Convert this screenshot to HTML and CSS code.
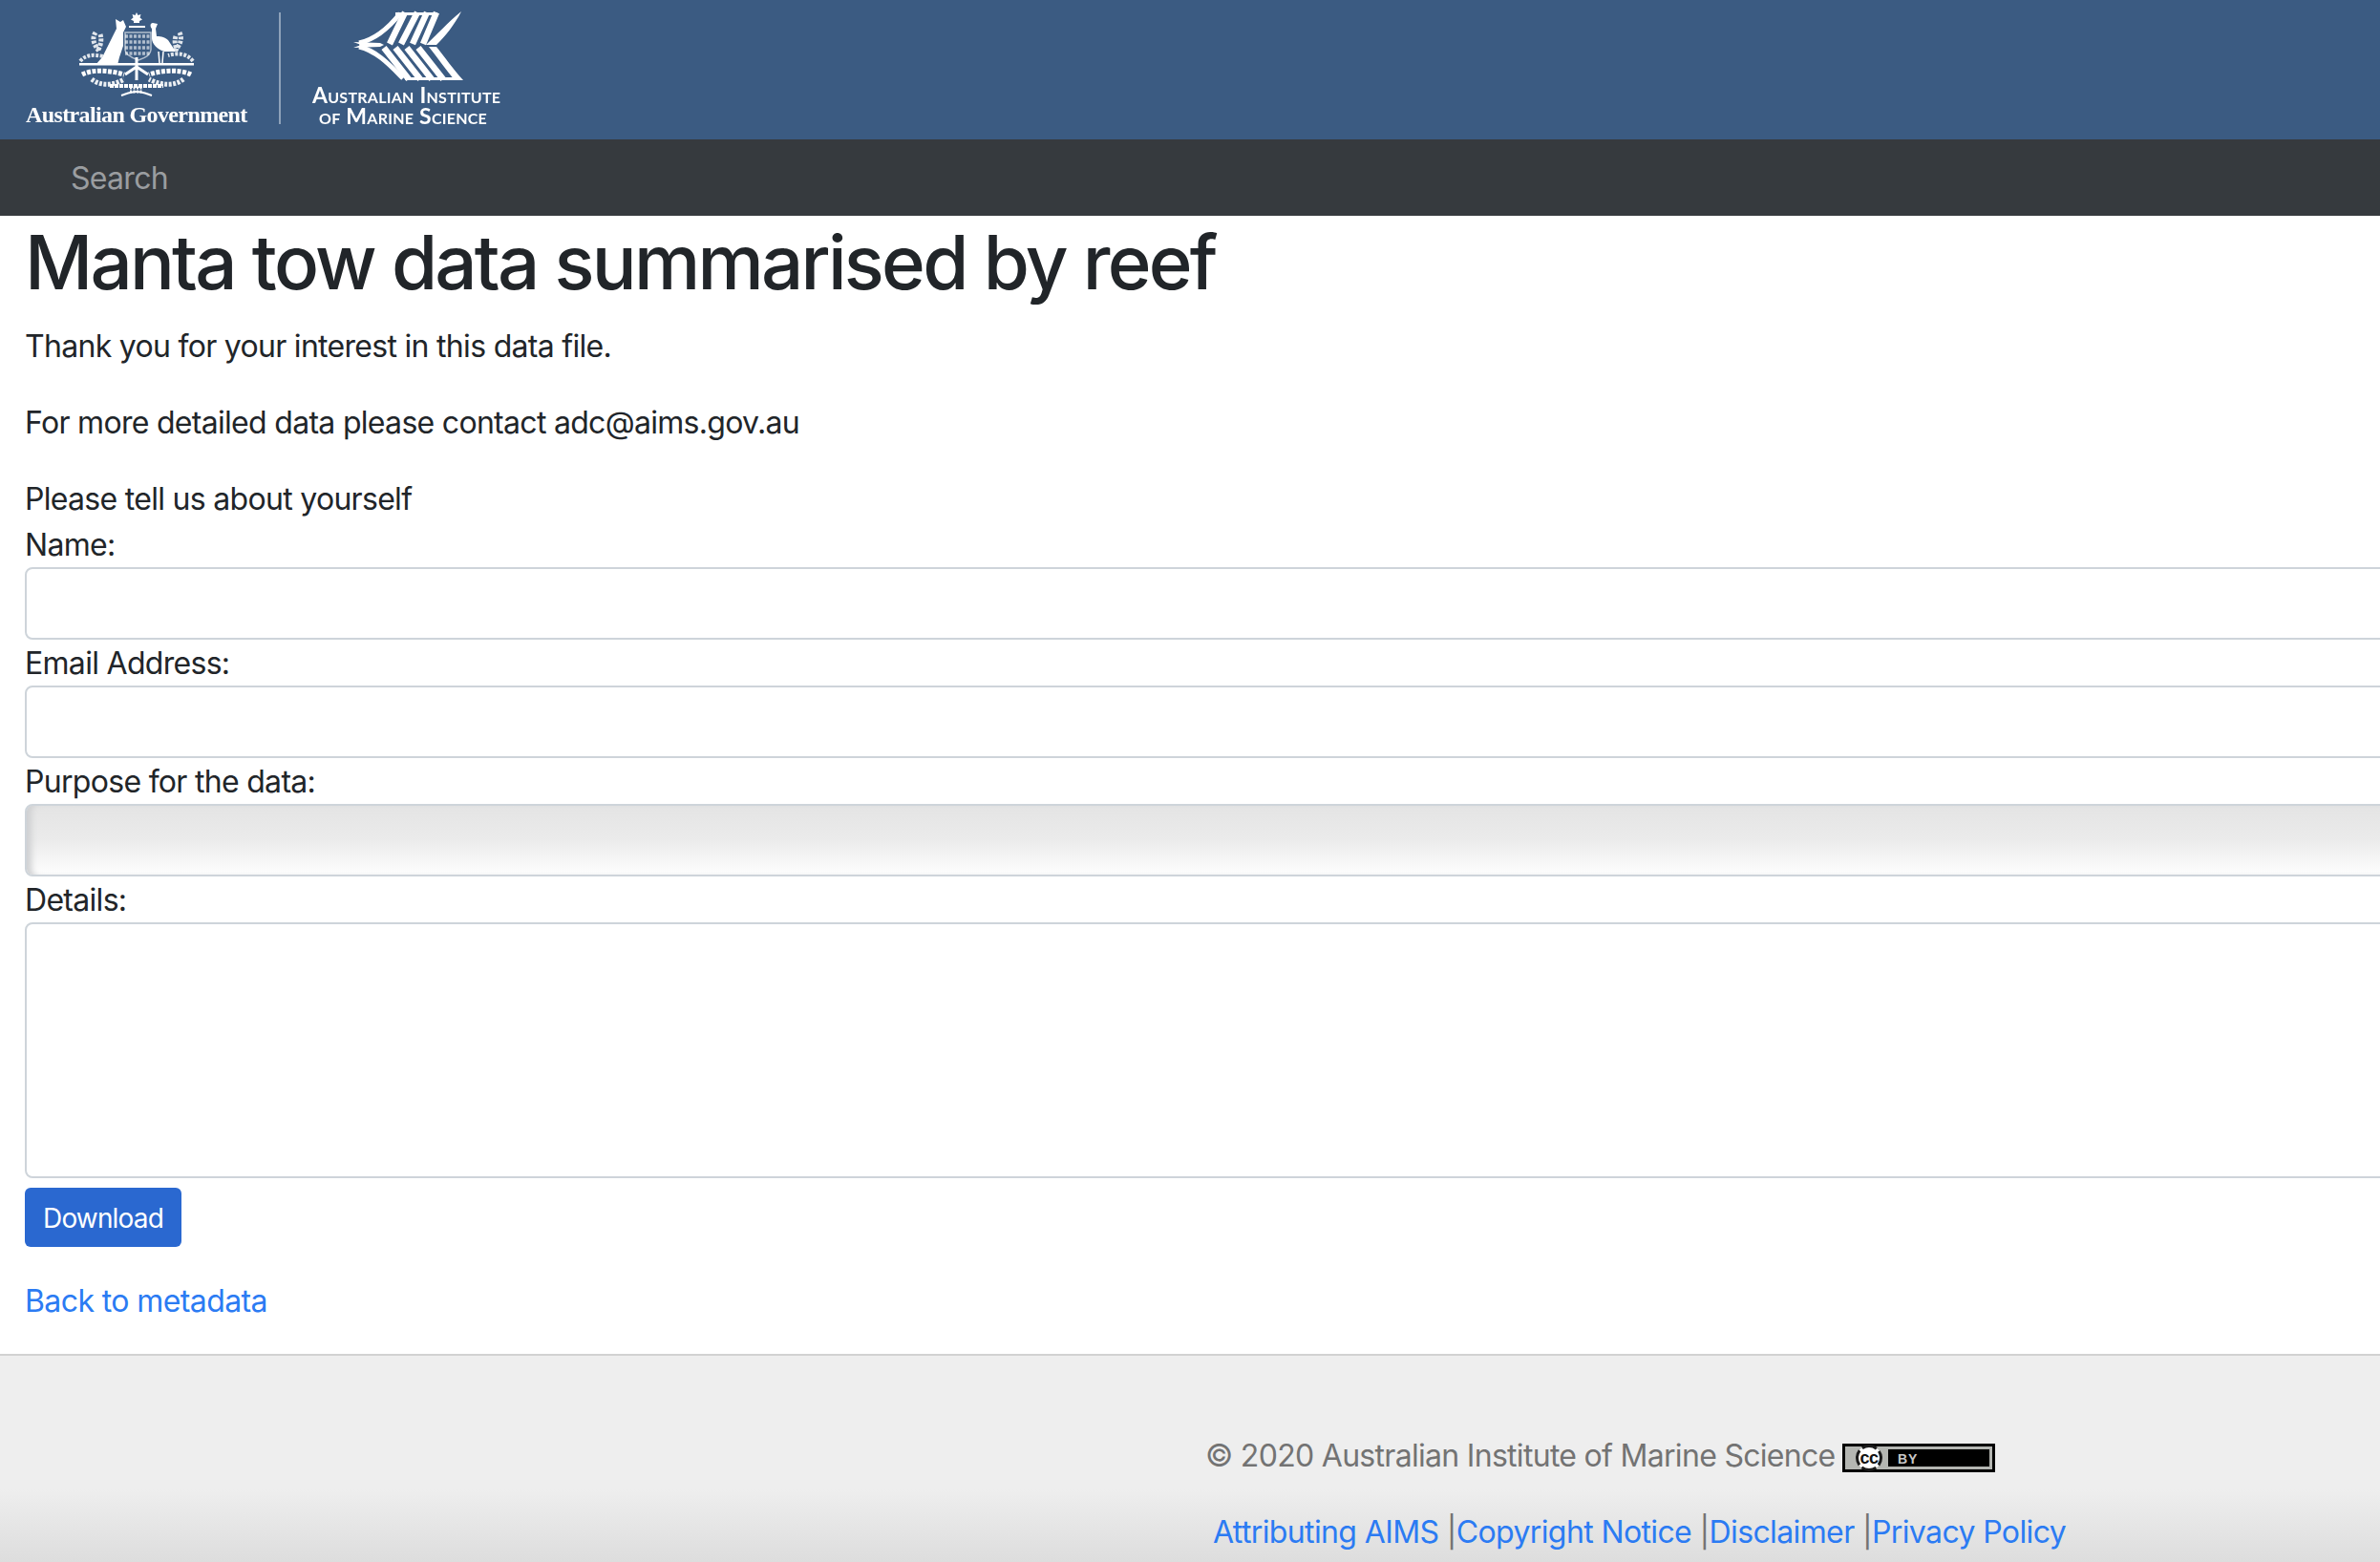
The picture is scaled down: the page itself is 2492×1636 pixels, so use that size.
FILE: index.html
```html
<!DOCTYPE html>
<html lang="en">
<head>
<meta charset="utf-8">
<title>Manta tow data summarised by reef</title>
<link rel="stylesheet" href="styles.css">
</head>
<body>
<header class="brand">
  <div class="gov">
    <svg class="arms" viewBox="70 8 146 96" width="146" height="96" aria-hidden="true">
      <g fill="#fff">
        <path d="M143 13l1.500 3 3-1-1 3.500 2.500 2-3 1.500v2h-6v-2l-3-1.500 2.500-2-1-3.500 3 1z"/>
        <rect x="135" y="27" width="17" height="2"/>
        <path d="M121 20L126 23L129 21L132 28L129 34L129 48L125 60L123 68L116 68L112 66L100 68L107 60L112 50L118 38L122 30Z"/>
        <path d="M160 24C157 24 157 28 159 30L159 40C159 46 165 52 172 54L184 54L176 42C172 38 166 38 164 38L163 30L165 25Z"/>
        <path d="M83 66h120v2.500H83z"/>
      </g>
      <g fill="none" stroke="#fff">
        <path d="M166 54l1 12M171 54l-1 12" stroke-width="1.500"/>
        <path d="M131 34h27v18c0 6-7 9-13 11-6-2-14-5-14-11z" stroke-width="1.500" opacity=".6"/>
        <path d="M131 38h27M131 44h27M131 50h27M131 56h27" stroke-width="3.500" stroke-dasharray="3 1.500" opacity=".6"/>
        <path d="M100 34c-5 8 0 14 4 20M105 36c2 6 0 12-2 16" stroke-width="5" stroke-dasharray="3 1.500" opacity=".85"/>
        <path d="M188 34c4 8-1 14-5 20M184 38c-2 6 0 10 1 14" stroke-width="5" stroke-dasharray="3 1.500" opacity=".85"/>
        <path d="M84 64c6-7 14-7 24-5M202 64c-6-8-16-9-26-6" stroke-width="4" stroke-dasharray="3 1.500" opacity=".85"/>
        <path d="M86 78c12-6 30-4 44 0M200 78c-12-6-32-4-44 0" stroke-width="5" stroke-dasharray="4 1.500"/>
        <path d="M96 83c10 8 24 6 34 0M192 83c-10 8-24 6-36 0" stroke-width="5" stroke-dasharray="3 1.500" opacity=".9"/>
        <path d="M143 60v24M143 70l-12 8M143 70l12 8" stroke-width="3"/>
        <path d="M115 90h56" stroke-width="4" stroke-dasharray="4 1"/>
        <path d="M127 100c6-2 10-4 16-4s10 2 16 4" stroke-width="2"/>
        <path d="M136 92h14M136 96h14" stroke-width="3" stroke-dasharray="2 1.500"/>
      </g>
    </svg>
    <span class="gov-name">Australian Government</span>
  </div>
  <div class="brand-rule"></div>
  <div class="aims">
    <svg class="aims-mark" viewBox="368 10 118 76" width="118" height="76" aria-hidden="true">
      <path d="M370 44L398 45L402 47L398 49L370 50L378 47Z" fill="#fff"/>
      <g fill="none" stroke="#fff" stroke-width="6.500">
        <path d="M376 45C394 41 408 28 419 14" stroke-width="5"/>
        <path d="M408 46L424 13M420 46L437 13M432 46L447 13M443 46L457 13"/>
        <path d="M376 49C394 53 408 68 422 82" stroke-width="5"/>
        <path d="M402 50L428 83M414 50L440 83M426 50L452 83M438 50L464 83"/>
      </g>
      <path d="M414 13H458V16H414Z" fill="#fff"/>
      <path d="M424 81H476V84H424Z" fill="#fff"/>
      <path d="M446 47C458 36 468 24 483 12C476 26 466 38 457 47Z" fill="#fff"/>
      <path d="M449 49L457 49C466 60 474 72 485 84L476 84C466 72 458 60 449 49Z" fill="#fff"/>
    </svg>
    <span class="aims-name">Australian Institute<br>of Marine Science</span>
  </div>
</header>
<nav class="topnav"><a class="topnav-link" href="#">Search</a></nav>
<main class="content">
  <h1 class="title">Manta tow data summarised by reef</h1>
  <p class="para">Thank you for your interest in this data file.</p>
  <p class="para">For more detailed data please contact adc@aims.gov.au</p>
  <form class="request">
    <div class="lead">Please tell us about yourself</div>
    <label class="field-label" for="name">Name:</label>
    <input class="control" id="name" type="text">
    <label class="field-label" for="email">Email Address:</label>
    <input class="control" id="email" type="text">
    <label class="field-label" for="purpose">Purpose for the data:</label>
    <div class="control control-select" id="purpose"></div>
    <label class="field-label" for="details">Details:</label>
    <textarea class="control control-area" id="details"></textarea>
    <button class="download" type="button">Download</button>
  </form>
  <a class="back" href="#">Back to metadata</a>
</main>
<footer class="foot">
  <div class="foot-copy">
    <span>© 2020 Australian Institute of Marine Science</span>
    <svg class="cc" viewBox="0 0 160 30" width="160" height="30" role="img" aria-label="CC BY">
      <rect width="160" height="30" fill="#000"/>
      <rect x="3" y="3" width="154" height="24" fill="#b4b6b2"/>
      <rect x="48" y="6" width="106" height="18" fill="#000"/>
      <circle cx="28" cy="15" r="13" fill="#fff"/>
      <circle cx="28" cy="15" r="12.500" fill="none" stroke="#1a1a1a" stroke-width="3" stroke-dasharray="16 23.300" stroke-dashoffset="8"/>
      <circle cx="28" cy="15" r="12.500" fill="none" stroke="#1a1a1a" stroke-width="3" stroke-dasharray="16 23.300" stroke-dashoffset="27.600"/>
      <text class="cc-cc" x="28" y="21">cc</text>
      <text class="cc-by" x="58" y="21">BY</text>
    </svg>
  </div>
  <div class="foot-links">
    <a href="#">Attributing AIMS</a> |<a href="#">Copyright Notice</a> |<a href="#">Disclaimer</a> |<a href="#">Privacy Policy</a>
  </div>
</footer>
</body>
</html>
```
FILE: styles.css
```css
* { box-sizing: border-box; }
html, body { margin: 0; height: 100%; overflow: hidden; }
body {
  display: flex;
  flex-direction: column;
  min-height: 1636px;
  background: #fff;
  color: #212529;
  font-family: Inter, "Liberation Sans", sans-serif;
  font-size: 32px;
  line-height: 48px;
  letter-spacing: -0.7px;
}
a { color: #2b7bf3; text-decoration: none; }

.brand {
  height: 146px;
  background: #3b5b82;
  color: #fff;
  display: flex;
  align-items: flex-start;
  flex: none;
  letter-spacing: 0;
}
.gov { width: 292px; padding-left: 26px; display: flex; flex-direction: column; }
.arms { display: block; margin: 8px 0 0 44px; filter: blur(.6px); }
.gov-name {
  font: bold 24px/26px "Liberation Serif", serif;
  letter-spacing: -.62px;
  margin: 3px 0 0 1px;
  filter: blur(.4px);
  white-space: nowrap;
}
.brand-rule { width: 2px; height: 117px; margin-top: 13px; background: #8ea2ba; }
.aims { margin-left: 12px; width: 230px; display: flex; flex-direction: column; align-items: flex-start; }
.aims-mark { display: block; margin: 10px 0 0 62px; filter: blur(.5px); }
.aims-name {
  font: 700 23px/22px Lato, "Liberation Sans", sans-serif;
  font-variant: small-caps;
  letter-spacing: .25px;
  white-space: nowrap;
  filter: blur(.4px);
  margin: 2px 0 0 21px;
  padding-left: 7px;
  text-indent: -7px;
}

.topnav { height: 80px; flex: none; background: #363a3e; padding: 17px 74px; }
.topnav-link { color: #9a9da0; }

.content { flex: none; padding: 0 0 32px 26px; overflow: hidden; }
.title {
  margin: 0 0 16px;
  padding-top: 1px;
  height: 96px;
  font-size: 78px;
  line-height: 96px;
  font-weight: 500;
  letter-spacing: -2.760px;
  white-space: nowrap;
}
.para { margin: 0 0 32px; height: 48px; padding-top: 1px; }
.request { display: block; }
.lead, .field-label { display: block; height: 48px; padding-top: 1px; }
.control {
  display: block;
  width: 2600px;
  height: 76px;
  margin: 0;
  border: 2px solid #ced4da;
  border-radius: 8px;
  background: #fff;
  font: inherit;
}
.control-select {
  background: linear-gradient(#e4e4e4 0%, #ebebeb 50%, #fdfdfd 100%);
  box-shadow: inset 8px 0 6px -3px #cfd0d2;
}
.control-area { height: 268px; resize: none; }
.download {
  display: block;
  margin: 10px 0 32px;
  width: 164px;
  height: 62px;
  padding: 2px 0 0;
  border: 0;
  border-radius: 6px;
  background: #2a68d0;
  color: #fff;
  font: inherit;
  font-size: 28px;
  line-height: 60px;
  letter-spacing: -.85px;
}
.back { display: block; height: 48px; padding-top: 1px; letter-spacing: -.6px; }

.foot {
  flex: 1;
  border-top: 2px solid #d2d2d2;
  background: linear-gradient(#eeeeee 0, #eeeeee 140px, #dddddd 100%);
  padding-top: 81px;
  color: #737373;
}
.foot-copy { margin-left: 1262px; height: 48px; display: flex; align-items: center; gap: 7px; }
.cc { display: block; margin-top: 4px; }
.cc-cc { font: bold 18px "Liberation Sans", sans-serif; fill: #111; text-anchor: middle; letter-spacing: -.5px; }
.cc-by { font: bold 14px "Liberation Sans", sans-serif; fill: #c8c8c8; letter-spacing: 1px; }
.foot-links { margin: 32px 0 0 1270px; white-space: nowrap; letter-spacing: -.62px; }
```
